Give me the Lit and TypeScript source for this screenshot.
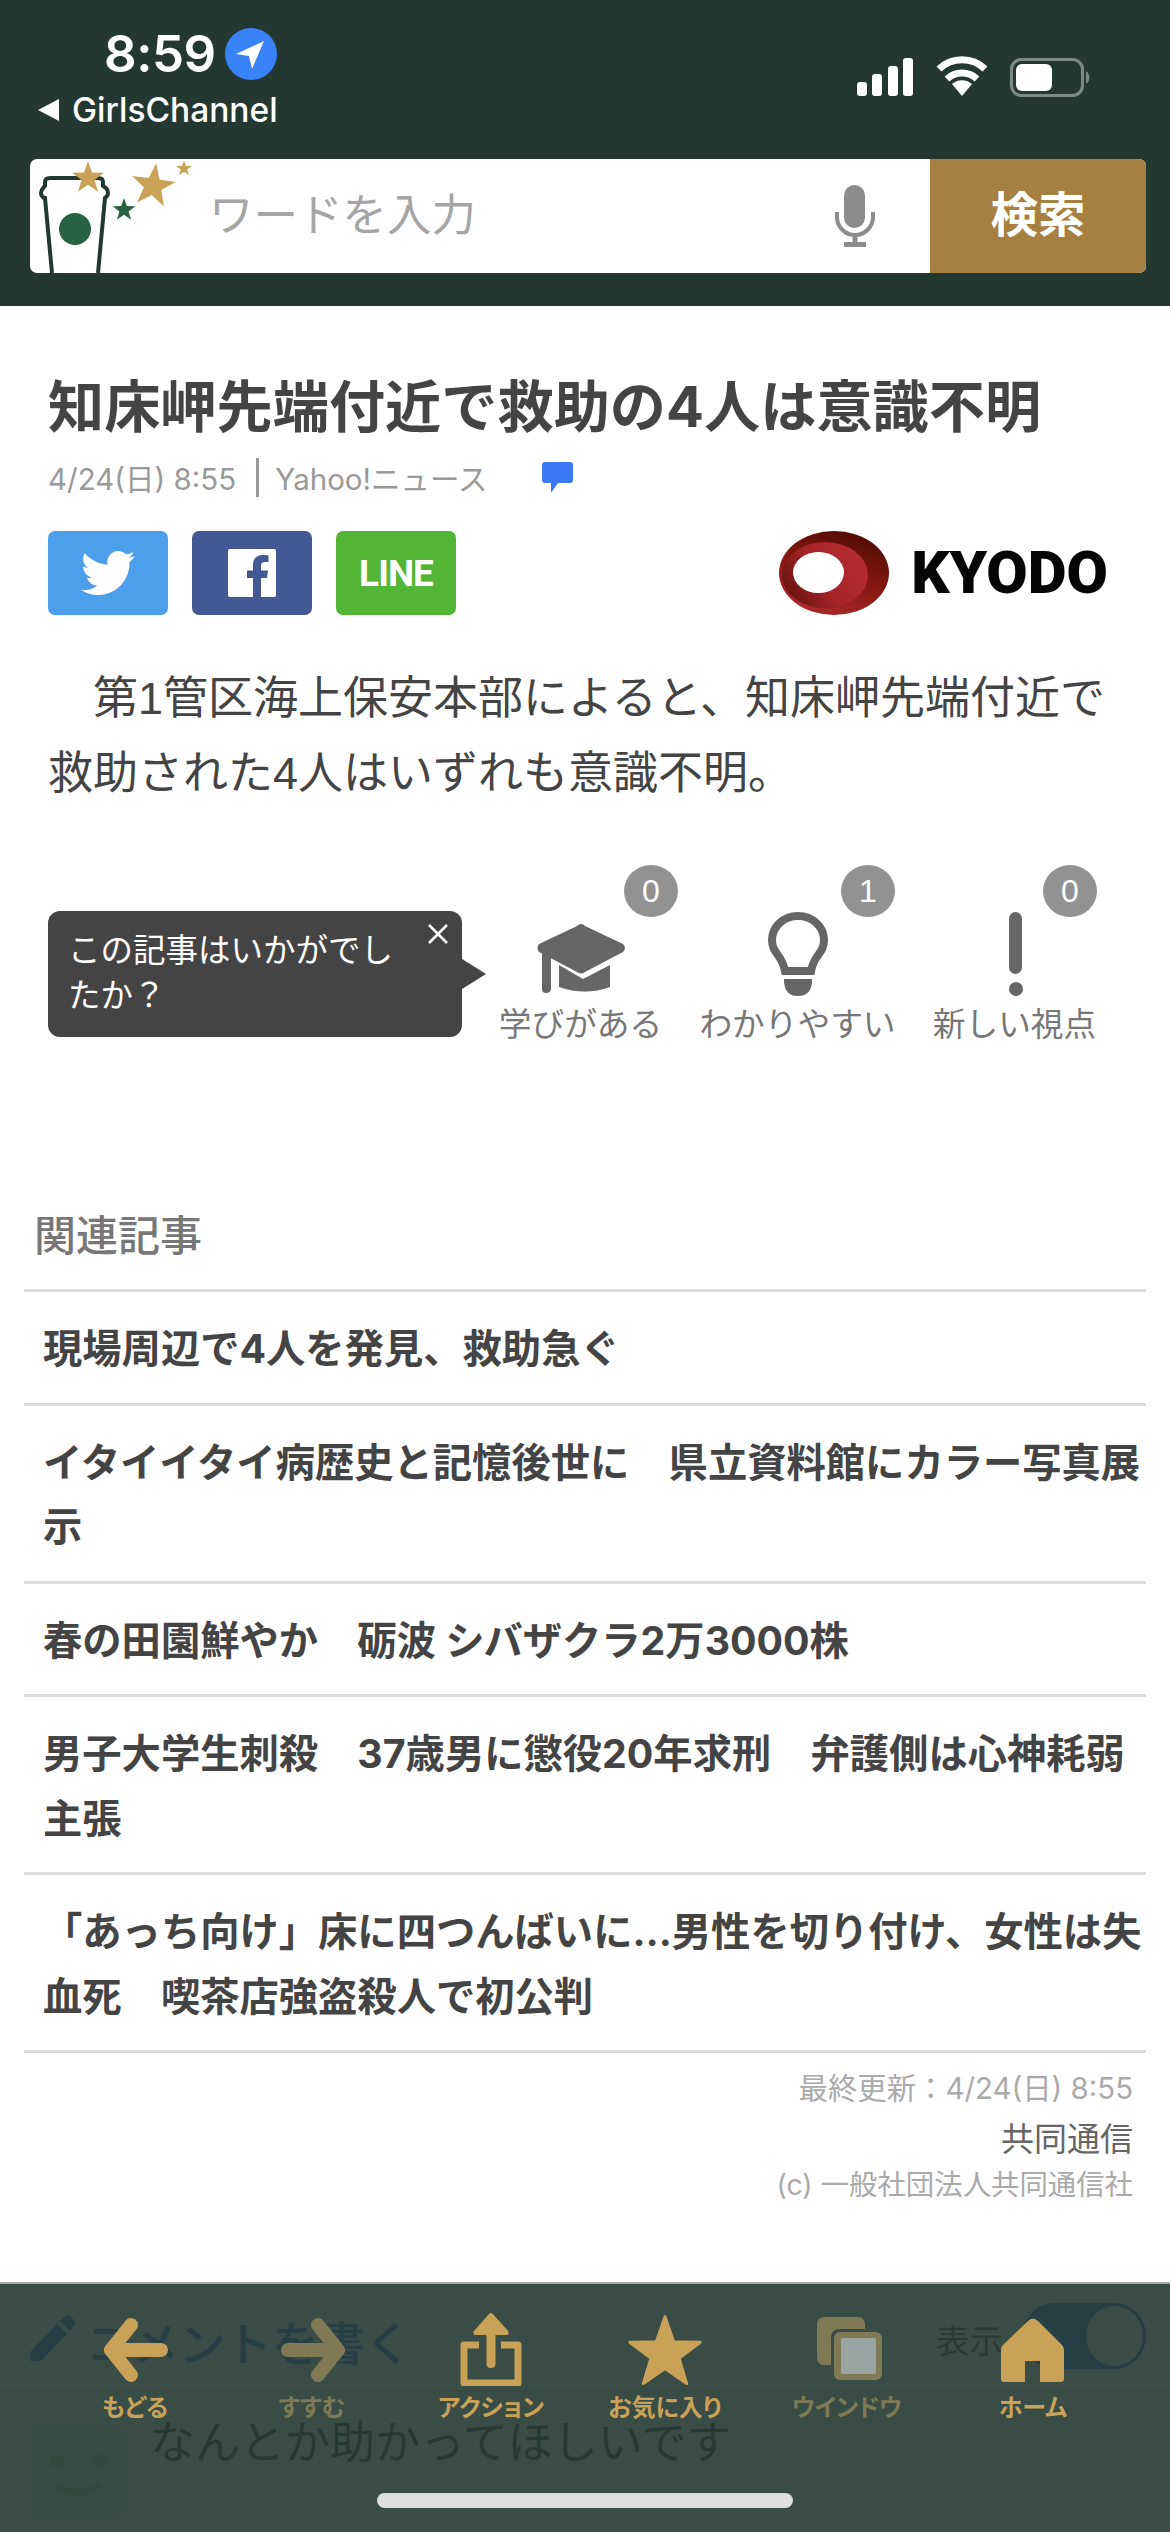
import { LitElement, html, css, svg } from "lit";
import { customElement } from "lit/decorators.js";

const GOLD = "#c9a258";
const DIM = "#7f7a55";

const star = (cx: number, cy: number, r: number, rot: number, fill: string, sw = 0) => {
  const pts: string[] = [];
  for (let i = 0; i < 10; i++) {
    const rad = i % 2 === 0 ? r : r * 0.4;
    const a = ((-90 + rot + i * 36) * Math.PI) / 180;
    pts.push(`${(cx + rad * Math.cos(a)).toFixed(1)},${(cy + rad * Math.sin(a)).toFixed(1)}`);
  }
  return svg`<polygon points=${pts.join(" ")} fill=${fill} stroke=${sw ? fill : "none"} stroke-width=${sw} stroke-linejoin="round"></polygon>`;
};

const RELATED = [
  "現場周辺で4人を発見、救助急ぐ",
  "イタイイタイ病歴史と記憶後世に　県立資料館にカラー写真展示",
  "春の田園鮮やか　砺波 シバザクラ2万3000株",
  "男子大学生刺殺　37歳男に懲役20年求刑　弁護側は心神耗弱主張",
  "「あっち向け」床に四つんばいに…男性を切り付け、女性は失血死　喫茶店強盗殺人で初公判",
];

@customElement("app-root")
export class AppRoot extends LitElement {
  static styles = css`
    :host {
      display: block;
      position: relative;
      width: 1170px;
      height: 2532px;
      overflow: hidden;
      background: #fff;
      font-family: "Liberation Sans", "Noto Sans CJK JP", sans-serif;
      color: #444;
    }
    svg { display: block; }
    .header { height: 306px; box-sizing: border-box; background: #243832; padding: 0 24px 0 30px; display: flex; flex-direction: column; }
    .status { height: 159px; display: flex; justify-content: space-between; color: #fff; }
    .status-left { margin-left: 8px; padding-top: 28px; }
    .time-row { display: flex; align-items: center; gap: 9px; height: 52px; padding-left: 66px; }
    .time { font: 600 51px/52px Inter, "Liberation Sans", sans-serif; letter-spacing: -0.5px; }
    .back-app { display: flex; align-items: center; gap: 13px; margin-top: 10px; font: 500 33.5px/40px Inter, "Liberation Sans", sans-serif; }
    .tri { width: 0; height: 0; border-style: solid; border-width: 11px 21px 11px 0; border-color: transparent #fff transparent transparent; }
    .status-right { display: flex; align-items: flex-start; padding-top: 56px; margin-right: 53px; }
    .search { height: 114px; display: flex; align-items: stretch; background: #fff; border-radius: 7px; overflow: hidden; }
    .search-deco { flex: none; width: 179px; }
    .placeholder { flex: 1; font-size: 44.5px; line-height: 114px; color: #a5a5a5; }
    .mic { flex: none; align-self: center; margin-right: 55px; }
    .search-btn { flex: none; width: 216px; background: #a68040; color: #fff; font-size: 47.5px; font-weight: 700; line-height: 114px; text-align: center; }

    .article { padding: 61px 48px 0; }
    .title { margin: 0; font-family: Inter, "Noto Sans CJK JP", sans-serif; font-size: 56.2px; line-height: 80px; font-weight: 700; color: #444; white-space: nowrap; }
    .meta { display: flex; align-items: center; margin-top: 10px; height: 40px; font-family: Inter, "Noto Sans CJK JP", sans-serif; font-size: 29.5px; color: #999; }
    .sep { width: 3px; height: 39px; background: #999; margin: 0 16px 0 20px; }
    .bubble { margin-left: 54px; }
    .share { display: flex; align-items: flex-start; margin-top: 34px; height: 84px; }
    .sbtn { width: 120px; height: 84px; border-radius: 7px; margin-right: 24px; display: flex; align-items: center; justify-content: center; }
    .tw { background: #4d9fec; }
    .fb { background: #425994; }
    .ln { background: #53b535; color: #fff; font: 700 37px/1 Roboto, sans-serif; letter-spacing: -1px; }
    .kyodo { margin-left: auto; margin-right: 14px; display: flex; align-items: center; gap: 22px; }
    .kyodo-text { font: 900 60px/84px Roboto, sans-serif; color: #050505; }
    .body { margin: 46px 0 0; font-size: 45px; line-height: 75px; text-indent: 1em; color: #444; }

    .reactions { display: flex; align-items: flex-start; margin-top: 54px; height: 339px; box-sizing: border-box; }
    .tip { position: relative; flex: none; box-sizing: border-box; width: 414px; height: 126px; margin-top: 46px; margin-right: 10px; padding: 18px 66px 0 20px; background: #444; border-radius: 12px; color: #fff; font-size: 32.5px; line-height: 45px; }
    .tip::after { content: ""; position: absolute; left: 100%; top: 48px; border-style: solid; border-width: 15px 0 15px 24px; border-color: transparent transparent transparent #444; }
    .tip-x { position: absolute; right: 13px; top: 12px; }
    .item { position: relative; flex: none; width: 217px; padding-top: 47px; display: flex; flex-direction: column; align-items: center; font-size: 32.7px; line-height: 46px; color: #777; white-space: nowrap; }
    .item svg { margin-bottom: 6px; }
    .badge { position: absolute; top: 0; left: 152px; width: 54px; height: 52px; border-radius: 50%; background: #929292; color: #fff; font-size: 32px; line-height: 52px; text-align: center; }
    .badge.near { left: 137px; }

    .related { padding: 0 24px; }
    .related-title { padding-left: 10px; font-size: 42px; line-height: 60px; font-weight: 500; color: #777; padding-top: 3px; margin-bottom: 22px; }
    .rel-row { border-top: 3px solid #ddd; padding: 25px 0 21px 19px; font-family: Inter, "Noto Sans CJK JP", sans-serif; font-size: 39.3px; line-height: 64.5px; font-weight: 700; color: #444; }
    .rel-end { border-top: 3px solid #ddd; }

    .foot { padding: 13px 37px 0 0; text-align: right; font-family: Inter, "Noto Sans CJK JP", sans-serif; font-size: 29.4px; line-height: 46px; color: #aaa; }
    .foot-src { font-size: 33px; line-height: 54px; color: #666; }
    .foot-c { font-size: 28.4px; margin-top: -4px; }

    .comment-head { position: absolute; left: 0; right: 0; top: 2292px; height: 100px; box-sizing: border-box; border-bottom: 2px solid #d8dcd4; padding: 0 24px 6px 30px; display: flex; align-items: center; }
    .ch-title { margin: 5px 0 0 10px; font-size: 46.5px; font-weight: 500; color: #3b78f5; }
    .ch-show { margin-left: auto; margin-right: 19px; font-size: 33.5px; color: #555; }
    .toggle { position: relative; flex: none; width: 124px; height: 66px; margin-bottom: 4px; border-radius: 33px; background: #3b78f5; }
    .knob { position: absolute; right: 0; top: 0; box-sizing: border-box; width: 63px; height: 66px; border-radius: 50%; border: 3px solid #3b78f5; background: #fff; }
    .comment { position: absolute; left: 30px; top: 2424px; display: flex; gap: 24px; }
    .avatar { flex: none; }
    .comment-text { font-size: 45px; line-height: 44px; color: #444; margin-top: -2px; }

    .toolbar { position: absolute; left: 0; right: 0; bottom: 0; height: 250px; box-sizing: border-box; border-top: 2px solid #a8a8a8; background: rgba(36, 56, 50, 0.9); padding: 24px 0 0 45px; display: grid; grid-template-columns: 180px 174px 184px 164px 200px 172px; align-content: start; }
    .tool { display: flex; flex-direction: column; align-items: center; font-size: 24px; line-height: 26px; font-weight: 700; color: #c9a258; white-space: nowrap; font-feature-settings: "palt"; }
    .tool svg { margin-bottom: 9px; }
    .dim { color: #7f7a55; }
    .home-bar { position: absolute; left: 377px; bottom: 24px; width: 416px; height: 15px; border-radius: 8px; background: #dedede; }
  `;

  render() {
    return html`
      <div class="header">
        <div class="status">
          <div class="status-left">
            <div class="time-row">
              <span class="time">8:59</span>
              <svg width="52" height="52" viewBox="0 0 52 52"><circle cx="26" cy="26" r="26" fill="#3a82f7"></circle><path d="M39 13 L11 26 L24 28 L27 41 Z" fill="#fff"></path></svg>
            </div>
            <div class="back-app"><span class="tri"></span><span>GirlsChannel</span></div>
          </div>
          <div class="status-right">
            <svg width="236" height="42" viewBox="857 56 236 42">
              <g fill="#fff">
                <rect x="857" y="82" width="10" height="14" rx="3"></rect>
                <rect x="872" y="74" width="10" height="22" rx="3"></rect>
                <rect x="888" y="66" width="10" height="30" rx="3"></rect>
                <rect x="903" y="58" width="10" height="38" rx="3"></rect>
                <path d="M962 96 L952 84 A15 15 0 0 1 972 84 Z"></path>
              </g>
              <g fill="none" stroke="#fff" stroke-width="7">
                <path d="M947 79 A22 22 0 0 1 977 79"></path>
                <path d="M939 69 A33 33 0 0 1 985 69"></path>
              </g>
              <rect x="1011.5" y="59.5" width="71" height="36" rx="10" fill="none" stroke="#7c8a85" stroke-width="3"></rect>
              <rect x="1016" y="64" width="36" height="27" rx="6" fill="#fff"></rect>
              <path d="M1086 71 A8 8 0 0 1 1086 84 Z" fill="#7c8a85"></path>
            </svg>
          </div>
        </div>
        <div class="search">
          <svg class="search-deco" width="179" height="114" viewBox="30 159 179 114">
            <path d="M52 273 L45 198 H44 Q41 196 41 193 Q41 190 44 187 L45 186 V182 Q45 178 50 178 H98 Q103 178 103 182 V186 L106 188 Q108 190 108 193 Q108 196 105 198 L98 273" fill="#fff" stroke="#243832" stroke-width="4"></path>
            <circle cx="75" cy="229" r="16" fill="#276342"></circle>
            ${star(88, 178, 17, 0, GOLD)}
            ${star(153, 186, 23, 8, GOLD)}
            ${star(184, 168.5, 8.3, 0, GOLD)}
            ${star(124, 210, 12, 0, "#276342")}
          </svg>
          <div class="placeholder">ワードを入力</div>
          <svg class="mic" width="40" height="62" viewBox="0 0 40 62">
            <rect x="9" y="0" width="21" height="43" rx="10.5" fill="#8c8c8c"></rect>
            <path d="M2 27 V32 A18 18 0 0 0 38 32 V27" fill="none" stroke="#8c8c8c" stroke-width="4"></path>
            <rect x="17.5" y="50" width="5" height="8" fill="#8c8c8c"></rect>
            <rect x="9" y="57" width="22" height="5" fill="#8c8c8c"></rect>
          </svg>
          <div class="search-btn">検索</div>
        </div>
      </div>

      <div class="article">
        <h1 class="title">知床岬先端付近で救助の4人は意識不明</h1>
        <div class="meta">
          <span>4/24(日) 8:55</span><span class="sep"></span><span>Yahoo!ニュース</span>
          <svg class="bubble" width="31" height="31" viewBox="0 0 31 31"><path d="M3 0 H28 Q31 0 31 3 V18 Q31 21 28 21 H16 L9 31 V21 H3 Q0 21 0 18 V3 Q0 0 3 0 Z" fill="#3b78f5"></path></svg>
        </div>
        <div class="share">
          <div class="sbtn tw">
            <svg width="54" height="54" viewBox="0 0 24 24"><path fill="#fff" d="M23.95 4.57a10 10 0 0 1-2.82.77 4.96 4.96 0 0 0 2.16-2.72c-.95.55-2 .95-3.12 1.18a4.92 4.92 0 0 0-8.38 4.48C7.69 8.1 4.07 6.13 1.64 3.16a4.82 4.82 0 0 0-.67 2.48c0 1.71.87 3.21 2.19 4.1a4.9 4.9 0 0 1-2.23-.62v.06a4.92 4.92 0 0 0 3.95 4.83 5 5 0 0 1-2.21.08 4.94 4.94 0 0 0 4.6 3.42A9.87 9.87 0 0 1 0 19.54a13.99 13.99 0 0 0 7.56 2.21c9.05 0 14-7.5 14-13.98 0-.21 0-.42-.02-.63a9.94 9.94 0 0 0 2.41-2.57z"></path></svg>
          </div>
          <div class="sbtn fb">
            <svg width="48" height="48" viewBox="0 0 48 48"><rect width="48" height="48" rx="2" fill="#fff"></rect><path fill="#425994" d="M33 48 V29 H39 L40 21.5 H33 V17 C33 14.5 34 13 37 13 H40.5 V6.5 C39.5 6.3 37.5 6 35 6 C29 6 25 9.5 25 16 V21.5 H19 V29 H25 V48 Z"></path></svg>
          </div>
          <div class="sbtn ln">LINE</div>
          <div class="kyodo">
            <svg width="110" height="84" viewBox="0 0 110 84">
              <defs>
                <linearGradient id="kg" x1="0.75" y1="0" x2="0.3" y2="1"><stop offset="0" stop-color="#4f0b05"></stop><stop offset="0.5" stop-color="#85170f"></stop><stop offset="1" stop-color="#ab2a2d"></stop></linearGradient>
                <linearGradient id="kg2" x1="0" y1="0.9" x2="1" y2="0.4"><stop offset="0" stop-color="#5a0f0a"></stop><stop offset="0.5" stop-color="#a42428"></stop><stop offset="1" stop-color="#b62b30"></stop></linearGradient>
              </defs>
              <ellipse cx="55" cy="42" rx="55" ry="42" fill="url(#kg)"></ellipse>
              <ellipse cx="46" cy="44" rx="43" ry="33" fill="url(#kg2)"></ellipse>
              <ellipse cx="39.5" cy="41.5" rx="25.5" ry="20.5" fill="#fff"></ellipse>
            </svg>
            <span class="kyodo-text">KYODO</span>
          </div>
        </div>
        <p class="body">第1管区海上保安本部によると、知床岬先端付近で救助された4人はいずれも意識不明。</p>
        <div class="reactions">
          <div class="tip">この記事はいかがでしたか？
            <svg class="tip-x" width="22" height="22" viewBox="0 0 22 22"><path d="M2 2 L20 20 M20 2 L2 20" stroke="#fff" stroke-width="2.5"></path></svg>
          </div>
          <div class="item">
            <span class="badge">0</span>
            <svg width="100" height="84" viewBox="528 913 100 84" fill="#666">
              <path d="M574 927 Q578 923 582 927 L620 945 Q624 949 620 953 L582 973 Q578 976 574 973 L536 953 Q533 949 536 945 Z"></path>
              <path d="M539 955 H548 V990 Q548 994 543 994 Q539 994 539 990 Z"></path>
              <path d="M556 966 L580 980 L607 966 V988 Q582 997 556 988 Z"></path>
            </svg>
            <span>学びがある</span>
          </div>
          <div class="item">
            <span class="badge">1</span>
            <svg width="100" height="84" viewBox="748 913 100 84" fill="none" stroke="#666">
              <path d="M785 972 C782 955 772 955 772 941 A26 24 0 0 1 824 941 C824 955 814 955 811 972 Z" stroke-width="8"></path>
              <path d="M784 980 H812 V983 Q811 997 798 997 Q785 997 784 983 Z" fill="#666" stroke="none"></path>
            </svg>
            <span>わかりやすい</span>
          </div>
          <div class="item">
            <span class="badge near">0</span>
            <svg width="100" height="84" viewBox="964 913 100 84" fill="#666">
              <rect x="1008" y="913" width="13" height="62" rx="6.5"></rect>
              <ellipse cx="1015" cy="990" rx="7" ry="7"></ellipse>
            </svg>
            <span>新しい視点</span>
          </div>
        </div>
      </div>

      <div class="related">
        <div class="related-title">関連記事</div>
        ${RELATED.map((t) => html`<div class="rel-row">${t}</div>`)}
        <div class="rel-end"></div>
      </div>

      <div class="foot">
        <div>最終更新：4/24(日) 8:55</div>
        <div class="foot-src">共同通信</div>
        <div class="foot-c">(c) 一般社団法人共同通信社</div>
      </div>

      <div class="comment-head">
        <svg width="46" height="46" viewBox="0 0 46 46"><path d="M0 46 V37 L27 9 L37 19 L11 46 Z M30 6 L34 2 Q37 -1 40 1 L44 5 Q47 8 44 11 L40 16 Z" fill="#3b78f5"></path></svg>
        <span class="ch-title">コメントを書く</span>
        <span class="ch-show">表示</span>
        <div class="toggle"><span class="knob"></span></div>
      </div>
      <div class="comment">
        <svg class="avatar" width="96" height="96" viewBox="0 0 96 96">
          <rect width="96" height="96" rx="12" fill="#dff5dc"></rect>
          <circle cx="27" cy="37" r="7" fill="#a8d8b4"></circle>
          <circle cx="70" cy="37" r="7" fill="#a8d8b4"></circle>
          <path d="M27 59 Q48 70 70 59 L72 63 Q48 82 25 63 Z" fill="#a8d8b4"></path>
        </svg>
        <div class="comment-text">なんとか助かってほしいです</div>
      </div>

      <div class="toolbar">
        <div class="tool">
          <svg width="66" height="78" viewBox="0 0 66 78" fill="none" stroke=${GOLD} stroke-width="14" stroke-linecap="round" stroke-linejoin="round"><path d="M29 17 L9 42 L29 67 M9 42 H59"></path></svg>
          もどる
        </div>
        <div class="tool">
          <svg width="66" height="78" viewBox="0 0 66 78" fill="none" stroke=${DIM} stroke-width="14" stroke-linecap="round" stroke-linejoin="round"><path d="M39 17 L59 42 L39 67 M59 42 H9"></path></svg>
          <span class="dim">すすむ</span>
        </div>
        <div class="tool">
          <svg width="66" height="78" viewBox="0 0 66 78"><path d="M21 37 H6 V75 H60 V37 H43" fill="none" stroke=${GOLD} stroke-width="7" stroke-linejoin="round"></path><path d="M33 5 Q34 5 35 6 L50 23 Q52 27 48 27 H37.5 V56 Q37.5 60 33 60 Q28.5 60 28.5 56 V27 H18 Q14 27 16 23 L31 6 Q32 5 33 5 Z" fill=${GOLD}></path></svg>
          アクション
        </div>
        <div class="tool">
          <svg width="76" height="78" viewBox="0 0 76 78">${star(38, 45.7, 37, 0, GOLD, 3)}</svg>
          お気に入り
        </div>
        <div class="tool">
          <svg width="70" height="78" viewBox="0 0 70 78">
            <rect x="5" y="9" width="48" height="48" rx="7" fill=${DIM}></rect>
            <rect x="19" y="21" width="54" height="54" rx="8" fill="#3a4c46"></rect>
            <rect x="22" y="24" width="48" height="48" rx="6" fill=${DIM}></rect>
            <rect x="29" y="30" width="35" height="36" rx="2" fill="#9aa5a3"></rect>
          </svg>
          <span class="dim">ウインドウ</span>
        </div>
        <div class="tool">
          <svg width="66" height="78" viewBox="0 0 66 78"><path d="M28 13 Q33 8 38 13 L62 37 Q64 39 64 42 V71 Q64 74 61 74 H40 V53 H25 V74 H4 Q1 74 1 71 V42 Q1 39 3 37 Z" fill=${GOLD}></path></svg>
          ホーム
        </div>
        <span class="home-bar"></span>
      </div>
    `;
  }
}
